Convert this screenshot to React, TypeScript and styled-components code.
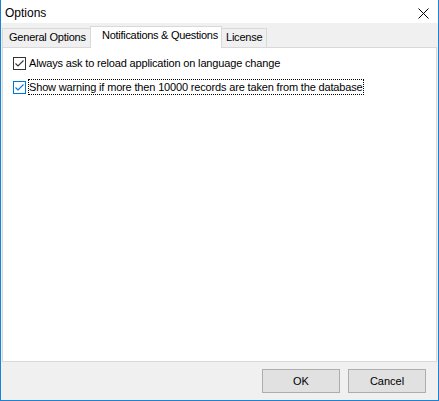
import React from "react";
import styled, { createGlobalStyle } from "styled-components";

const Global = createGlobalStyle`
  html, body { margin: 0; padding: 0; background: #ffffff; }
  * { box-sizing: border-box; }
`;

const Window = styled.div`
  width: 439px;
  height: 401px;
  border: 1px solid #1883d7;
  border-top: none;
  background: #f0f0f0;
  display: flex;
  flex-direction: column;
  font-family: "Liberation Sans", Arial, sans-serif;
  font-size: 11px;
  letter-spacing: -0.2px;
  color: #000;
`;

const TitleBar = styled.div`
  height: 23px;
  flex: none;
  background: #ffffff;
  display: flex;
  justify-content: space-between;
  align-items: flex-start;
  padding: 6px 9px 0 4px;
`;

const Title = styled.span`
  font-family: "Segoe UI", "Liberation Sans", sans-serif;
  font-size: 12px;
  line-height: 14px;
  letter-spacing: 0;
`;

const CloseIcon = styled.svg`
  display: block;
  margin-top: 2px;
`;

const TabStrip = styled.div`
  height: 24px;
  flex: none;
  display: flex;
  align-items: flex-end;
  padding-left: 1px;
`;

const Tab = styled.div<{ $width: number; $pad: number; $active?: boolean }>`
  width: ${(p) => p.$width}px;
  height: ${(p) => (p.$active ? 22 : 19)}px;
  padding: 2px 0 0 ${(p) => p.$pad}px;
  line-height: 13px;
  white-space: nowrap;
  letter-spacing: ${(p) => (p.$active ? -0.28 : -0.22)}px;
  border: 1px solid #d9d9d9;
  border-bottom: none;
  background: ${(p) => (p.$active ? "#ffffff" : "#f0f0f0")};
  position: relative;
  z-index: ${(p) => (p.$active ? 2 : 1)};
  margin-bottom: ${(p) => (p.$active ? -1 : 0)}px;
  & + & {
    margin-left: -1px;
  }
`;

const Panel = styled.div`
  flex: 1;
  margin: 0 1px;
  background: #ffffff;
  border: 1px solid #d9d9d9;
  padding: 7px 0 0 10px;
  display: flex;
  flex-direction: column;
  gap: 8px;
`;

const CheckRow = styled.label`
  display: flex;
  align-items: center;
  gap: 2px;
  height: 16px;
`;

const CheckLabel = styled.span<{ $focused?: boolean }>`
  line-height: 14px;
  letter-spacing: -0.16px;
  border: 1px dotted ${(p) => (p.$focused ? "#000000" : "transparent")};
  white-space: nowrap;
`;

const BottomBar = styled.div`
  height: 38px;
  flex: none;
  display: flex;
  justify-content: flex-end;
  align-items: flex-start;
  gap: 8px;
  padding: 7px 12px 0 0;
`;

const Button = styled.button`
  width: 78px;
  height: 24px;
  background: #e1e1e1;
  border: 1px solid #adadad;
  font-family: "Liberation Sans", Arial, sans-serif;
  font-size: 11px;
  color: #000;
  padding: 0;
  display: flex;
  align-items: center;
  justify-content: center;
`;

function CheckBox({ color }: { color: string }) {
  return (
    <svg width="13" height="13" viewBox="0 0 13 13" style={{ display: "block", flex: "none" }}>
      <rect x="0.5" y="0.5" width="12" height="12" fill="#ffffff" stroke={color} />
      <path d="M2.5 6.5 L5 9 L10.5 3.5" fill="none" stroke={color} strokeWidth="1.1" />
    </svg>
  );
}

export default function App() {
  return (
    <>
      <Global />
      <Window>
        <TitleBar>
          <Title>Options</Title>
          <CloseIcon width="11" height="11" viewBox="0 0 11 11">
            <path d="M0.5 0.5 L10.5 10.5 M10.5 0.5 L0.5 10.5" stroke="#000" strokeWidth="1" />
          </CloseIcon>
        </TitleBar>
        <TabStrip>
          <Tab $width={89} $pad={6}>General Options</Tab>
          <Tab $width={132} $pad={11} $active>
            Notifications &amp; Questions
          </Tab>
          <Tab $width={46} $pad={4}>License</Tab>
        </TabStrip>
        <Panel>
          <CheckRow>
            <CheckBox color="#333333" />
            <CheckLabel>Always ask to reload application on language change</CheckLabel>
          </CheckRow>
          <CheckRow>
            <CheckBox color="#0078d7" />
            <CheckLabel $focused>Show warning if more then 10000 records are taken from the database</CheckLabel>
          </CheckRow>
        </Panel>
        <BottomBar>
          <Button>OK</Button>
          <Button>Cancel</Button>
        </BottomBar>
      </Window>
    </>
  );
}
